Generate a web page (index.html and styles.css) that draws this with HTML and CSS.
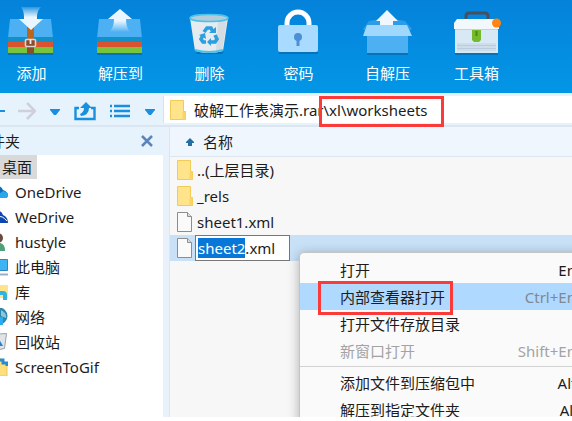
FILE: index.html
```html
<!DOCTYPE html>
<html lang="zh-CN">

<head>
    <meta charset="UTF-8">
    <meta name="viewport" content="width=device-width, initial-scale=1.0">
    <title>压缩</title>
    <link rel="stylesheet" href="styles.css">
</head>

<body>
    <div class="app">
        <!-- 工具栏 -->
        <header class="toolbar">
            <button type="button">
                <svg viewBox="0 0 49 48">
                    <defs>
                        <linearGradient id="fadeDown" x1="0" y1="0" x2="0" y2="1">
                            <stop offset="0" stop-color="#fff" stop-opacity="0.15" />
                            <stop offset="0.45" stop-color="#eaf6ff" />
                        </linearGradient>
                        <linearGradient id="fadeUp" x1="0" y1="1" x2="0" y2="0">
                            <stop offset="0" stop-color="#fff" stop-opacity="0" />
                            <stop offset="0.5" stop-color="#eaf6ff" />
                        </linearGradient>
                    </defs>
                    <path d="M1 46h45v2H1z" fill="#0872b8" />
                    <path d="M3 12h41l2 19H1z" fill="#4cb0f3" />
                    <path d="M1 30h45v5H1z" fill="#1290c8" />
                    <path d="M1 35h45v5H1z" fill="#d9532f" />
                    <path d="M1 40h45v6H1z" fill="#78c43a" />
                    <path d="M20 19h7v16h-7z" fill="#bb661c" />
                    <path d="M20 35h7v11h-7z" fill="#8b4b2c" />
                    <rect x="18.500" y="32.500" width="10" height="7" rx="1" fill="#8b4b2c" stroke="#dcd5d0" stroke-width="1.600" />
                    <path d="M23.500 32v5" stroke="#eee" stroke-width="1.800" />
                    <path d="M14 0c3 4 3 8 3 12h-5l12 11 12-11h-6c0-4 0-8 4-12z" fill="url(#fadeDown)" />
                </svg>
                <span>添加</span>
            </button>
            <button type="button">
                <svg viewBox="0 0 49 48">
                    <path d="M1 46h45v2H1z" fill="#0872b8" />
                    <path d="M3 12h41l2 19H1z" fill="#4cb0f3" />
                    <path d="M1 30h45v5H1z" fill="#1290c8" />
                    <path d="M1 35h45v5H1z" fill="#d9532f" />
                    <path d="M1 40h45v6H1z" fill="#78c43a" />
                    <path d="M24 2l12 10h-6c0 5 1 9 4 13H13c4-4 5-8 5-13h-6z" fill="url(#fadeUp)" />
                </svg>
                <span>解压到</span>
            </button>
            <button type="button">
                <svg viewBox="0 0 49 48">
                    <path d="M10 44h29l-2 3H12z" fill="#0872b8" />
                    <path d="M5 11h38l-5 33q-14 4-28 0z" fill="#e6ebef" />
                    <path d="M33 13h9l-5 31h-6z" fill="#d5dce2" />
                    <path d="M10 43q14 4 28 0" fill="none" stroke="#48c3ee" stroke-width="2" />
                    <ellipse cx="24" cy="11" rx="19" ry="3.500" fill="#b4cdd9" stroke="#48c3ee" stroke-width="1.600" />
                    <g fill="none" stroke="#2b9fe0" stroke-width="3.600">
                        <path d="M19 25l3-4h4l2 4" />
                        <path d="M30 28l2 4-2 3h-5" />
                        <path d="M21 35h-3l-2-3 2-4" />
                    </g>
                    <g fill="#2b9fe0">
                        <path d="M24 26h7v-6z" />
                        <path d="M26 31v8l-4-4z" />
                        <path d="M14 28l6-2 1 6z" />
                    </g>
                </svg>
                <span>删除</span>
            </button>
            <button type="button">
                <svg viewBox="0 0 49 48">
                    <path d="M5 45h39v2H5z" fill="#0872b8" />
                    <path d="M13 20v-4a11 11 0 0 1 22 0v4" fill="none" stroke="#fff" stroke-width="5" />
                    <rect x="4" y="18" width="40" height="27" rx="2" fill="#a8dbff" />
                    <circle cx="24" cy="30" r="4" fill="#4d8fd6" />
                    <path d="M22.500 31h3v8h-3z" fill="#4d8fd6" />
                </svg>
                <span>密码</span>
            </button>
            <button type="button">
                <svg viewBox="0 0 49 48">
                    <path d="M4 46h41v2H4z" fill="#0872b8" />
                    <path d="M0 22l6-8q18-4 36 0l7 8-5 4H4z" fill="#2d9ce8" />
                    <path d="M24 3l11 11h-5v6H17v-6h-4z" fill="#f0f8ff" />
                    <path d="M4 28h41v18H4z" fill="#4cb0f3" />
                    <path d="M4 18h40l5 11H0z" fill="#a0d8fd" />
                </svg>
                <span>自解压</span>
            </button>
            <button type="button">
                <svg viewBox="0 0 49 48">
                    <path d="M3 46h43v2H3z" fill="#0872b8" />
                    <path d="M14 13V9q0-3 3-3h16q3 0 3 3v4" fill="none" stroke="#46505f" stroke-width="3" />
                    <path d="M3 22h43v24H3z" fill="#d8e8f5" />
                    <path d="M5 12h38l4 4v6H2v-6z" fill="#f3f8fc" />
                    <path d="M3 22.500h43" stroke="#bfd3e2" />
                    <path d="M5 36h39v8H5z" fill="#cddde9" />
                    <path d="M5 38.500h39M5 41.500h39" stroke="#b9cddd" />
                    <path d="M20 23h9v10l-2 2h-5l-2-2z" fill="#74bb2c" />
                    <path d="M24.500 24v5" stroke="#4b8718" stroke-width="2" />
                    <circle cx="44.500" cy="16" r="4.500" fill="#ff8412" />
                </svg>
                <span>工具箱</span>
            </button>
        </header>

        <!-- 地址栏 -->
        <div class="location">
            <nav class="nav">
                <button type="button" aria-label="后退">
                    <svg width="19" height="20" viewBox="0 0 19 20"><path d="M19 10H2M10 2l-8 8 8 8" fill="none" stroke="#1a8fe0" stroke-width="2" /></svg>
                </button>
                <button type="button" aria-label="前进" disabled>
                    <svg width="18" height="20" viewBox="0 0 18 20"><path d="M0 10h16M9 2l8 8-8 8" fill="none" stroke="#cfd0da" stroke-width="2.500" /></svg>
                </button>
                <button type="button" aria-label="历史">
                    <svg width="12" height="20" viewBox="0 0 12 20"><path d="M1 8h10v1l-4 5H5L1 9z" fill="#1a8fe0" /></svg>
                </button>
                <button type="button" aria-label="上一级">
                    <svg width="22" height="20" viewBox="0 0 22 20">
                        <path d="M5 7H1.500v11h19V7H17" fill="none" stroke="#1a8fe0" stroke-width="2.400" />
                        <path d="M12 1l6 6h-3q0 7-8 8l-1-2q4-2 4-6H6z" fill="#1a8fe0" />
                    </svg>
                </button>
                <button type="button" aria-label="查看方式">
                    <svg width="22" height="20" viewBox="0 0 22 20"><path d="M1 5h2M1 10h2M1 15h2M5 5h16M5 10h16M5 15h16" stroke="#1a8fe0" stroke-width="2.600" /></svg>
                </button>
                <button type="button" aria-label="更多">
                    <svg width="12" height="20" viewBox="0 0 12 20"><path d="M1 8h10v1l-4 5H5L1 9z" fill="#1a8fe0" /></svg>
                </button>
            </nav>
            <div class="address">
                <svg class="icon" viewBox="0 0 16 20"><path d="M0.500 0.500h13v11h2v8h-15z" fill="#ffe48c" stroke="#f0cb58" /><path d="M12.500 12v7.500h3V12z" fill="#f9d566" /></svg>
                <input type="text" aria-label="地址" value="破解工作表演示.rar\xl\worksheets">
                <span class="mark mark-path"></span>
            </div>
        </div>

        <main class="content">
            <!-- 文件夹树 -->
            <aside class="sidebar">
                <div class="sidebar-title">
                    <span>文件夹</span>
                    <button type="button" aria-label="关闭">
                        <svg width="12" height="12" viewBox="0 0 12 12"><path d="M1 1l10 10M11 1L1 11" stroke="#5b84b8" stroke-width="2.500" /></svg>
                    </button>
                </div>
                <ul class="tree">
                    <li class="root"><a href="#">桌面</a></li>
                    <li><a href="#">
                        <svg viewBox="0 0 18 18"><path d="M2 15a5 5 0 0 1 0-9 6 6 0 0 1 11 1q5 2 5 5 0 3-3 3z" fill="#0f6cbd" /><path d="M4 15l9-7q5 1 5 4 0 3-3 3z" fill="#28a8ea" /></svg>
                        OneDrive</a></li>
                    <li><a href="#">
                        <svg viewBox="0 0 18 18"><path d="M0 15V7l6-3q5-3 7 3 5 2 5 8z" fill="#0c47b5" /><path d="M8 9q4-2 9 4" stroke="#fff" fill="none" /></svg>
                        WeDrive</a></li>
                    <li><a href="#">
                        <svg viewBox="0 0 18 18"><path d="M1 18q0-8 8-8 6 0 6 8z" fill="#4f9f78" /><circle cx="8" cy="5" r="5" fill="#6b4b3e" /><circle cx="7" cy="7" r="3" fill="#e8b797" /></svg>
                        hustyle</a></li>
                    <li><a href="#">
                        <svg viewBox="0 0 18 18"><path d="M0.500 1.500h17v11H0.500z" fill="#3eb4f4" stroke="#2f86c1" /><path d="M4 16.500h14" stroke="#9ab0c4" stroke-width="2" /></svg>
                        此电脑</a></li>
                    <li><a href="#">
                        <svg viewBox="0 0 18 18"><path d="M0 2h18v13H0z" fill="#ffe48c" /><path d="M3 10h10q2 0 2 2v5" fill="none" stroke="#2fb3e4" stroke-width="4" /></svg>
                        库</a></li>
                    <li><a href="#">
                        <svg viewBox="0 0 18 18"><circle cx="9" cy="8" r="8.500" fill="#2f86ad" /><path d="M11 2q6 3 5 8l-5-2z" fill="#8cc7d8" /><path d="M3 9h10v8H3z" fill="#29abf0" /></svg>
                        网络</a></li>
                    <li><a href="#">
                        <svg viewBox="0 0 18 18"><path d="M0.500 1.500l16-1-2 15-10 2z" fill="#dfe4e8" stroke="#98a2a9" /><path d="M5 13l4-7 4 7z" fill="#2c80c8" /></svg>
                        回收站</a></li>
                    <li><a href="#">
                        <svg viewBox="0 0 18 18"><path d="M2 1h9l6 5v12H2z" fill="#ffdf7c" stroke="#efc750" /><path d="M7 2h6v3h4v3" fill="none" stroke="#2b8bd0" stroke-width="3" /></svg>
                        ScreenToGif</a></li>
                </ul>
            </aside>

            <!-- 文件列表 -->
            <section class="files">
                <button type="button" class="column">
                    <svg width="10" height="10" viewBox="0 0 10 10"><path d="M5 1l4 4v1H7v3H3V6H1V5z" fill="#246f9f" /></svg>
                    名称
                </button>
                <ul class="list">
                    <li>
                        <svg class="icon" viewBox="0 0 16 20"><path d="M0.500 0.500h13v11h2v8h-15z" fill="#ffe48c" stroke="#f0cb58" /><path d="M12.500 12v7.500h3V12z" fill="#f9d566" /></svg>
                        <a href="#">..(上层目录)</a>
                    </li>
                    <li>
                        <svg class="icon" viewBox="0 0 16 20"><path d="M0.500 0.500h13v11h2v8h-15z" fill="#ffe48c" stroke="#f0cb58" /><path d="M12.500 12v7.500h3V12z" fill="#f9d566" /></svg>
                        <a href="#">_rels</a>
                    </li>
                    <li>
                        <svg class="icon" viewBox="0 0 16 20"><path d="M0.500 0.500h10l4 4v15h-14z" fill="#fafafa" stroke="#8d8d8d" /><path d="M10.500 0.500v4h4" fill="#ddd" stroke="#8d8d8d" /></svg>
                        <a href="#">sheet1.xml</a>
                    </li>
                    <li class="selected">
                        <svg class="icon" viewBox="0 0 16 20"><path d="M0.500 0.500h10l4 4v15h-14z" fill="#fafafa" stroke="#8d8d8d" /><path d="M10.500 0.500v4h4" fill="#ddd" stroke="#8d8d8d" /></svg>
                        <input type="text" class="rename" aria-label="重命名" value="sheet2.xml">
                    </li>
                </ul>
            </section>

            <!-- 右键菜单 -->
            <div class="menu">
                <button type="button"><span>打开</span><kbd>Enter</kbd></button>
                <button type="button" class="active"><span>内部查看器打开</span><kbd>Ctrl+Enter</kbd><i class="mark mark-item"></i></button>
                <button type="button"><span>打开文件存放目录</span></button>
                <button type="button" disabled><span>新窗口打开</span><kbd>Shift+Enter</kbd></button>
                <hr>
                <button type="button"><span>添加文件到压缩包中</span><kbd>Alt+D</kbd></button>
                <button type="button"><span>解压到指定文件夹</span><kbd>Alt+X</kbd></button>
            </div>
        </main>
    </div>

    <script>
        // 重命名时只选中文件名，不选后缀
        let rename = document.querySelector('.rename');
        rename.focus();
        rename.setSelectionRange(0, rename.value.lastIndexOf('.'));
    </script>
</body>

</html>
```
FILE: styles.css
```css
* {
    box-sizing: border-box;
}

body {
    margin: 0;
    background-color: #fff;
    color: #1c1c1c;
    font: 15px/24px "Noto Sans", "Noto Sans CJK SC", sans-serif;
    overflow: hidden;
}

ul {
    margin: 0;
    padding: 0;
    list-style: none;
}

button,
input,
kbd {
    font: inherit;
    color: inherit;
}

button {
    padding: 0;
    border: 0;
    background: none;
}

a {
    color: inherit;
    text-decoration: none;
}

svg {
    display: block;
    flex: none;
}

.app {
    display: flex;
    flex-direction: column;
    height: calc(100vh - 4px);
    overflow: hidden;
}

/* 工具栏 */
.toolbar {
    display: flex;
    flex: none;
    padding: 7px 0 8px;
    background: linear-gradient(#0582da, #0396e6);
    color: #fff;
}

.toolbar button {
    display: flex;
    flex-direction: column;
    align-items: center;
    gap: 6px;
    width: 89px;
}

.toolbar button:first-child {
    margin-left: -13px;
}

.toolbar svg {
    width: 49px;
    height: 48px;
}

/* 地址栏 */
.location {
    display: flex;
    flex: none;
    height: 34px;
    padding: 3px 0 2px;
    background-color: #e6f2fc;
    border-bottom: 2px solid #dce6f0;
}

.nav {
    display: flex;
    flex: none;
    align-items: center;
    gap: 13px;
    width: 163px;
    padding-top: 2px;
}

.nav button:first-child {
    margin-left: -14px;
}

.address {
    position: relative;
    display: flex;
    flex: 1;
    align-items: center;
    padding-left: 6px;
    background-color: #fff;
    border-left: 1px solid #d9e3ee;
}

.address input {
    flex: 1;
    min-width: 0;
    margin-left: 8px;
    padding: 0;
    border: 0;
    background: none;
}

.icon {
    width: 16px;
    height: 20px;
}

/* 红框标注 */
.mark {
    position: absolute;
    border: 3px solid #fb3a3a;
}

.mark-path {
    top: 0;
    left: 155px;
    width: 125px;
    height: 31px;
}

.mark-item {
    top: -2px;
    left: 18px;
    width: 135px;
    height: 34px;
}

.content {
    position: relative;
    display: flex;
    flex: 1;
    min-height: 0;
}

/* 文件夹树 */
.sidebar {
    flex: none;
    width: 169px;
    border-right: 6px solid #e9f2fb;
}

.sidebar-title {
    display: flex;
    align-items: center;
    justify-content: space-between;
    height: 28px;
    padding-right: 10px;
    background-color: #e6f2fc;
}

.sidebar-title span {
    margin-left: -25px;
}

.tree a {
    display: flex;
    align-items: center;
    gap: 7px;
    height: 25px;
    margin-left: -10px;
}

.tree svg {
    width: 18px;
    height: 18px;
}

.tree .root a {
    width: 37px;
    height: 24px;
    margin-left: 0;
    padding-left: 2px;
    background-color: #d9d9d9;
}

/* 文件列表 */
.files {
    flex: 1;
    background-color: #f7f7f7;
    border-left: 1px solid #dbe6f1;
}

.column {
    display: flex;
    align-items: center;
    gap: 8px;
    width: 100%;
    height: 30px;
    padding-left: 15px;
    background-color: #eff6fe;
    border-bottom: 1px solid #dbe6f1;
}

.list li {
    display: flex;
    align-items: center;
    gap: 4px;
    height: 26px;
    padding-left: 7px;
}

.list .selected {
    gap: 2px;
    background-color: #c8e1f7;
}

.rename {
    width: 95px;
    height: 26px;
    padding: 0 2px;
    border: 1px solid #777;
    outline: 0;
    background-color: #fff;
}

.rename::selection {
    background-color: #0878d8;
    color: #fff;
}

/* 右键菜单 */
.menu {
    position: absolute;
    top: 125px;
    left: 299px;
    width: 320px;
    padding: 3px 0;
    background-color: #fafafa;
    border: 1px solid #c4c4c4;
    border-radius: 5px;
    box-shadow: 0 2px 12px rgba(0, 0, 0, 0.3);
}

.menu button {
    position: relative;
    display: flex;
    justify-content: space-between;
    align-items: center;
    width: 100%;
    height: 27px;
    padding: 0 22px 0 40px;
}

.menu button:disabled {
    color: #a3a3a3;
}

.menu .active {
    background-color: #b0d9ff;
}

.menu .active kbd {
    color: #808890;
}

.menu hr {
    height: 1px;
    margin: 2px 0;
    border: 0;
    background-color: #d2d2d2;
}
```
